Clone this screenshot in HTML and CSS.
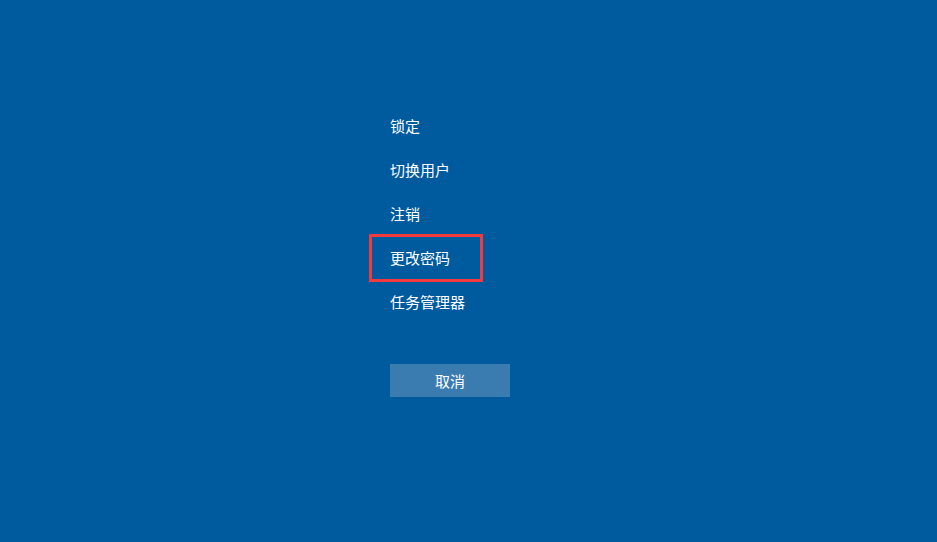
FILE: index.html
```html
<!DOCTYPE html>
<html lang="zh-CN">
<head>
<meta charset="utf-8">
<title>安全选项</title>
<link rel="stylesheet" href="styles.css">
</head>
<body>
<div class="screen">
  <ul class="menu">
    <li class="item">锁定</li>
    <li class="item">切换用户</li>
    <li class="item">注销</li>
    <li class="item highlighted">更改密码</li>
    <li class="item">任务管理器</li>
  </ul>
  <button class="cancel">取消</button>
</div>
</body>
</html>
```
FILE: styles.css
```css
html, body {
  margin: 0;
  padding: 0;
  height: 100%;
  background: #005a9e;
}
.screen {
  width: 937px;
  height: 542px;
  box-sizing: border-box;
  padding: 104px 0 0 390px;
  font-family: "Microsoft YaHei", "Noto Sans CJK SC", "Noto Sans", sans-serif;
  color: #ffffff;
  display: flex;
  flex-direction: column;
  align-items: flex-start;
}
.menu {
  list-style: none;
  margin: 0;
  padding: 0;
}
.item {
  font-size: 15px;
  line-height: 44px;
  height: 44px;
  position: relative;
}
.highlighted::after {
  content: "";
  position: absolute;
  left: -21px;
  top: -2px;
  width: 114px;
  height: 48px;
  box-sizing: border-box;
  border: 3px solid #f43a3c;
}
.cancel {
  margin-top: 40px;
  width: 120px;
  height: 33px;
  border: none;
  background: #3a7bb0;
  color: #ffffff;
  font-family: "Microsoft YaHei", "Noto Sans CJK SC", "Noto Sans", sans-serif;
  font-size: 15px;
  padding: 0;
}
```
